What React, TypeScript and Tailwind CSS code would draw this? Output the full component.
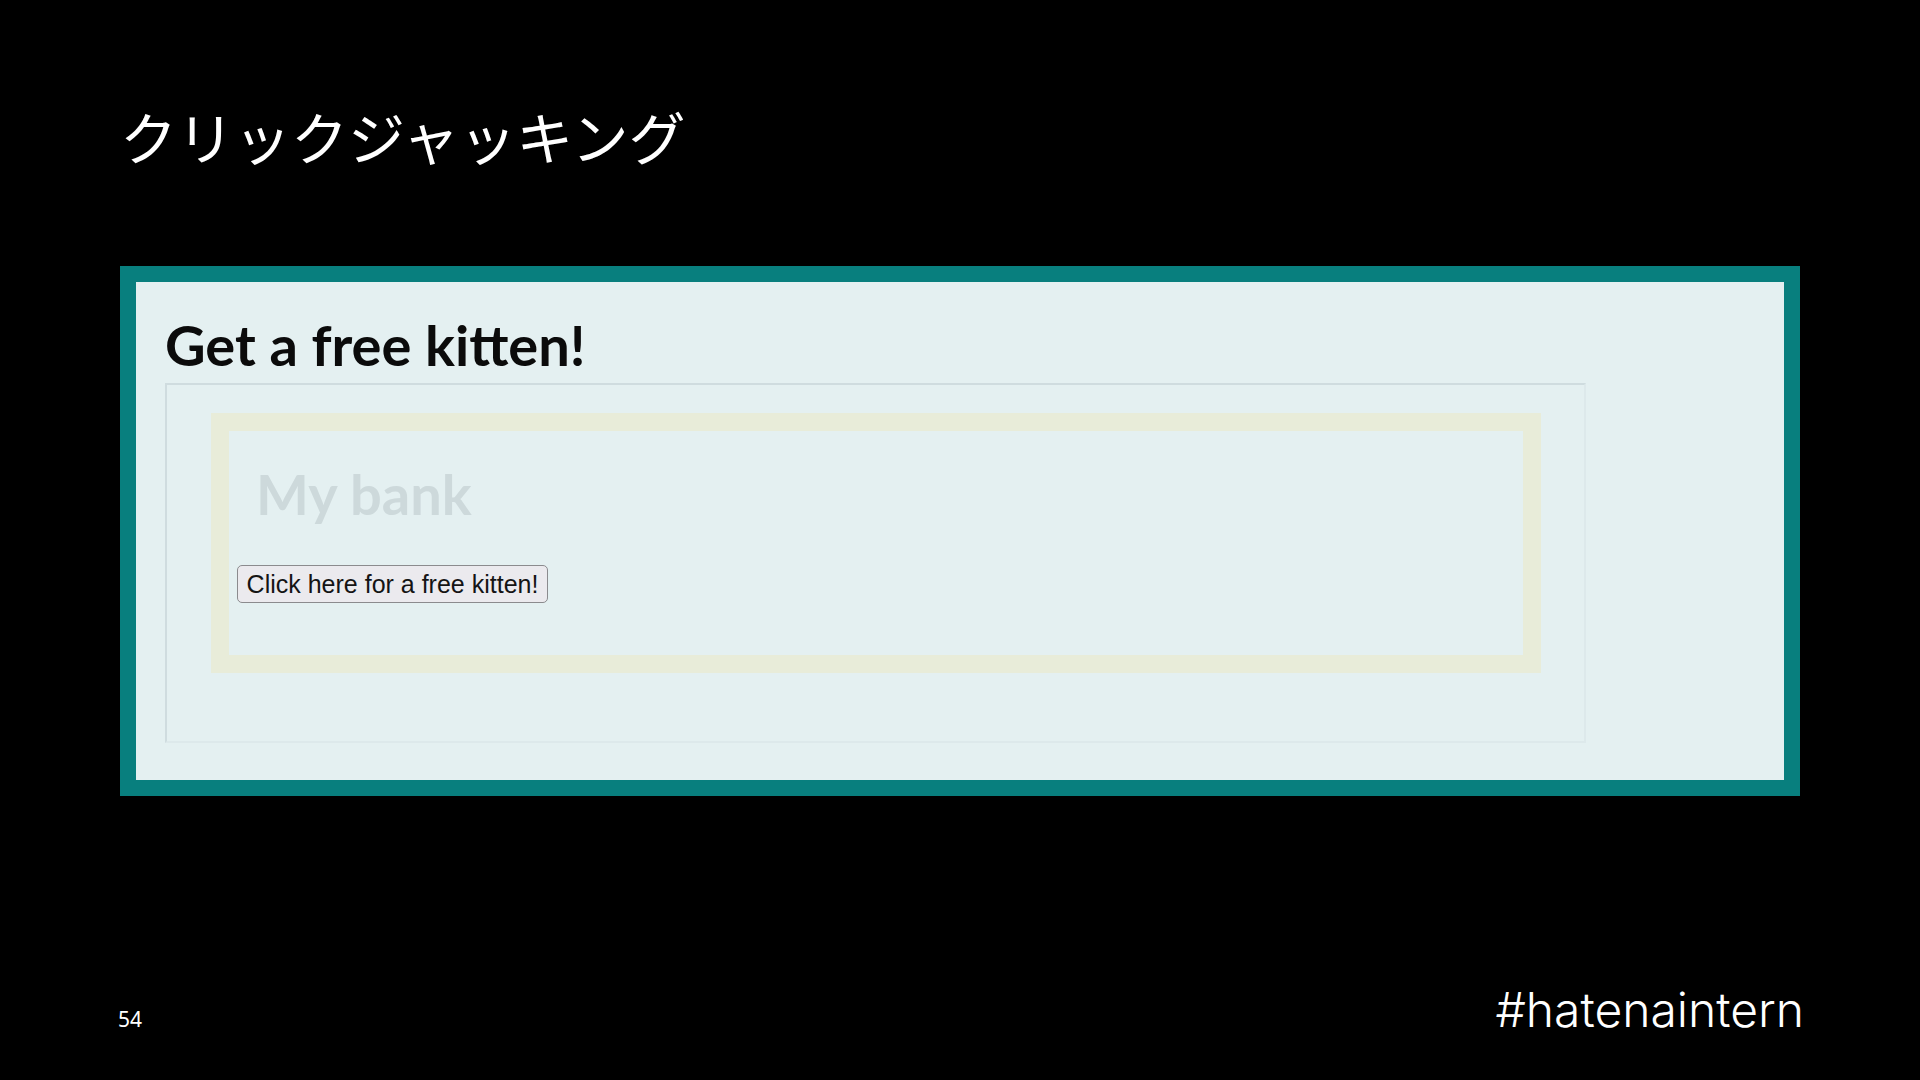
import React from "react";

export default function App() {
  return (
    <div className="w-[1920px] h-[1080px] bg-black overflow-hidden flex flex-col px-[120px]">
      <h1 className="pt-[107px] text-[57px] leading-none text-white font-normal font-['Noto_Sans_CJK_JP','Noto_Sans',sans-serif]">
        クリックジャッキング
      </h1>

      <div className="mt-[102px] h-[530px] border-[16px] border-[#087f7e] bg-[#e4f0f1] pl-[29px] pt-[35px]">
        <h2 className="text-[56px] leading-none font-bold text-[#0b0b0b] font-['Lato','Noto_Sans',sans-serif]">
          Get a free kitten!
        </h2>

        <div className="relative mt-[10px] w-[1421px] h-[360px] border-2 border-t-[#cfdcdf] border-l-[#cfdcdf] border-r-[#dde9eb] border-b-[#dde9eb]">
          <div className="ml-[44px] mt-[28px] w-[1330px] h-[260px] border-[18px] border-[#e8ecd9] pl-[27px] pt-[35px]">
            <div className="text-[56px] leading-none font-bold text-[#cdd9db] font-['Lato','Noto_Sans',sans-serif]">
              My bank
            </div>
            <div className="mt-[48px] pl-[4px] text-[25px] leading-none text-[#d3dfe1] font-['Liberation_Sans',Arial,sans-serif]">
              Transfer all your money?
            </div>
          </div>

          <button className="absolute left-[70px] top-[180px] w-[311px] h-[38px] rounded-[5px] border border-[#8b8b8e] bg-[#ebeaee] text-[25px] leading-none text-[#141414] flex items-center justify-center font-['Liberation_Sans',Arial,sans-serif]">
            Click here for a free kitten!
          </button>
        </div>
      </div>

      <div className="mt-auto pb-[46px] flex items-baseline justify-between">
        <span className="-ml-[2px] text-[21px] leading-none text-white font-['Noto_Sans',sans-serif]">
          54
        </span>
        <span className="-mr-[4px] text-[48px] leading-none text-white font-light font-['Inter','Noto_Sans',sans-serif]">
          #hatenaintern
        </span>
      </div>
    </div>
  );
}
